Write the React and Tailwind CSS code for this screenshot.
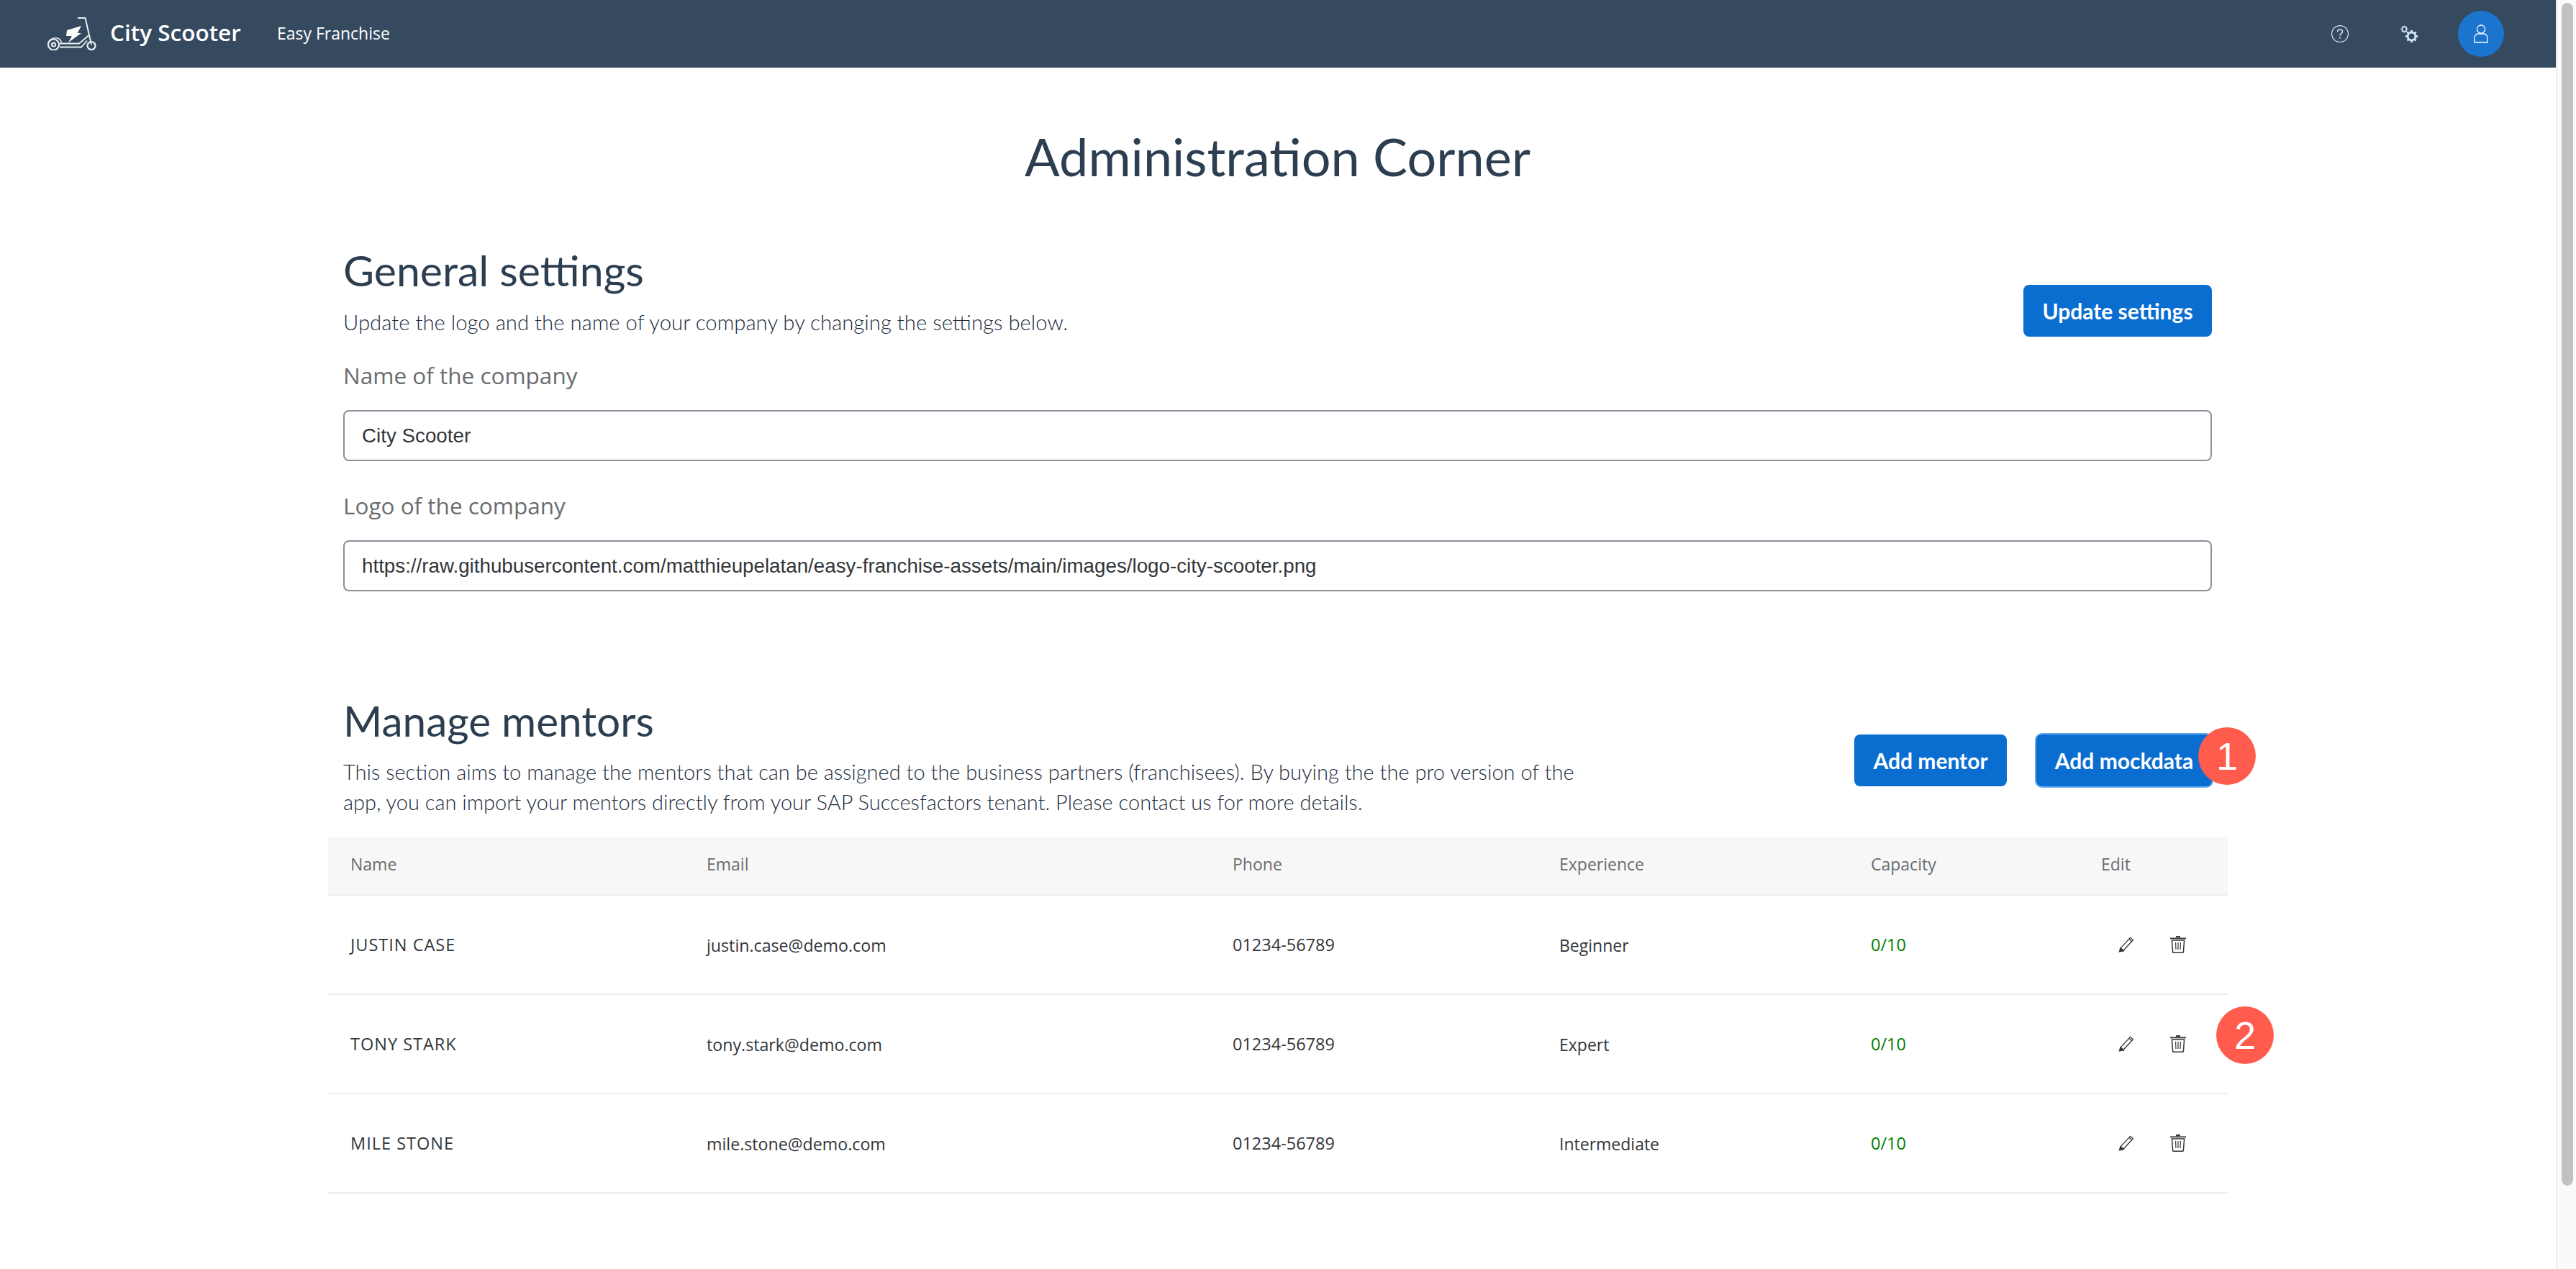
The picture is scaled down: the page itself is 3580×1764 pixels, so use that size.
import React from "react";

const mentors = [
  { name: "JUSTIN CASE", email: "justin.case@demo.com", experience: "Beginner" },
  { name: "TONY STARK", email: "tony.stark@demo.com", experience: "Expert" },
  { name: "MILE STONE", email: "mile.stone@demo.com", experience: "Intermediate" },
];

const gridCols = "grid grid-cols-[495px_731px_454px_433px_320px_1fr]";

const ScooterLogo = () => (
  <svg viewBox="0 0 68 46" className="h-[46px] w-[68px] shrink-0" fill="none" stroke="#e8edf2" strokeWidth="2">
    <path d="M42 1h10.5l8.5 37" />
    <path d="M17 36.5h27l13-11M17 41.5h30l8-9" strokeWidth="1.8" />
    <circle cx="61" cy="39.5" r="5.5" strokeWidth="2.2" />
    <circle cx="8.5" cy="38" r="7.5" strokeWidth="2.2" />
    <circle cx="8.5" cy="38" r="2.6" strokeWidth="2" />
    <path d="M0.5 37c1-6 7-9 13-8 3 .5 5 3 6 6" strokeWidth="1.6" />
    <path d="M27 18l20-6-5.5 10H47L29 35l5-9h-8z" fill="#ffffff" stroke="none" />
  </svg>
);

const HelpIcon = () => (
  <svg viewBox="0 0 24 24" className="h-6 w-6" fill="none" stroke="#d1e8ff" strokeWidth="1.2">
    <circle cx="12" cy="12" r="11.4" />
    <path d="M8.6 9.2c0-2 1.5-3.3 3.4-3.3s3.4 1.2 3.4 3c0 2.8-3.4 2.6-3.4 5.6" strokeWidth="1.5" />
    <circle cx="12" cy="17.6" r="1.1" fill="#d1e8ff" stroke="none" />
  </svg>
);

const GearsIcon = () => (
  <svg viewBox="0 0 24 24" className="h-6 w-6" fill="none" stroke="#d1e8ff">
    <circle cx="5.4" cy="5.6" r="3.1" strokeWidth="1.4" />
    <path d="M5.4 0.4v2M5.4 8.8v2M0.2 5.6h2M8.6 5.6h2M1.8 2l1.4 1.4M7.6 7.8L9 9.2M1.8 9.2l1.4-1.4M7.6 3.4L9 2" strokeWidth="1.5" />
    <circle cx="15.5" cy="15.5" r="5.4" strokeWidth="2.8" />
    <path d="M15.5 7v3M15.5 21v3M7 15.5h3M21 15.5h3M9.5 9.5l2 2M19.5 19.5l2 2M9.5 21.5l2-2M19.5 11.5l2-2" strokeWidth="3" />
  </svg>
);

const UserIcon = () => (
  <svg viewBox="0 0 20 26" className="h-[26px] w-5" fill="none" stroke="#ffffff" strokeWidth="1.3">
    <circle cx="10" cy="6.6" r="5.6" />
    <path d="M1 25v-6c0-3 2-6 5-6h8c3 0 5 3 5 6v6z" />
  </svg>
);

const PencilIcon = () => (
  <svg viewBox="0 0 22 22" className="h-[22px] w-[22px]" fill="none" stroke="#32363a" strokeWidth="1.3">
    <path d="M16.6 1.4l3.8 3.4L7 19.3l-3.8-3.4z" />
    <path d="M15 3.4l3.6 3.4" />
    <path d="M1.4 21l1.4-5 4.4 3.8z" fill="#32363a" />
  </svg>
);

const TrashIcon = () => (
  <svg viewBox="0 0 22 24" className="h-6 w-[22px]" fill="none" stroke="#32363a" strokeWidth="1.5">
    <path d="M0 3.4h22" strokeWidth="1.8" />
    <path d="M8 1.2h6" strokeWidth="2.2" />
    <path d="M2.4 6h17.2L18.4 22.2c-.1.8-.6 1.1-1.4 1.1H5c-.8 0-1.3-.3-1.4-1.1z" />
    <path d="M7.6 9l.4 10M11 9v10M14.4 9l-.4 10" strokeWidth="1.2" />
  </svg>
);

const Badge = ({ children, className }) => (
  <div className={`absolute flex h-20 w-20 items-center justify-center rounded-full bg-[#ff5c4d] font-['Liberation_Sans',sans-serif] text-[54px] font-normal leading-none text-white ${className}`}>
    {children}
  </div>
);

const PrimaryButton = ({ children, className = "" }) => (
  <button className={`relative h-[72px] rounded-lg bg-[#0a6ed1] text-[30px] font-bold text-white ${className}`}>
    {children}
  </button>
);

const TextField = ({ label, value, className = "" }) => (
  <div className={className}>
    <label className="block font-['Open_Sans',sans-serif] text-[31.5px] leading-10 text-[#6a6d70]">{label}</label>
    <div className="mt-[28px] flex h-[71px] items-center rounded-lg border-2 border-[#89919a] px-[24px] font-['Liberation_Sans',sans-serif] text-[27.75px] text-[#32363a]">
      {value}
    </div>
  </div>
);

export default function App() {
  return (
    <div className="flex h-[1764px] w-full overflow-hidden bg-white font-['Lato',sans-serif]">
      <div className="min-w-0 flex-1">
        {/* Shell bar */}
        <header className="flex h-[94px] items-center bg-[#354a5f] pl-[66px] pr-[72px] text-white">
          <ScooterLogo />
          <span className="ml-[19px] pb-1 font-['Open_Sans',sans-serif] text-[31.5px] font-semibold">City Scooter</span>
          <span className="ml-[50px] pb-0.5 font-['Open_Sans',sans-serif] text-[23px]">Easy Franchise</span>
          <div className="ml-auto flex items-center">
            <HelpIcon />
            <div className="ml-[72px]"><GearsIcon /></div>
            <div className="ml-[56px] flex h-16 w-16 items-center justify-center rounded-full bg-[#1b74ce]">
              <UserIcon />
            </div>
          </div>
        </header>

        <main className="pl-[477px] pr-[478px] pt-[75px] text-[#2c3e50]">
          <h1 className="text-center text-[72px] leading-[96px]">Administration Corner</h1>

          <section className="mt-[76px] flex items-start justify-between">
            <div>
              <h2 className="text-[59px] leading-[70px]">General settings</h2>
              <p className="mt-4 text-[29.3px] font-light leading-[42px] text-[#1d2d3e]">
                Update the logo and the name of your company by changing the settings below.
              </p>
            </div>
            <PrimaryButton className="mt-[55px] w-[262px]">Update settings</PrimaryButton>
          </section>

          <TextField className="mt-[33px]" label="Name of the company" value="City Scooter" />
          <TextField
            className="mt-[42px]"
            label="Logo of the company"
            value="https://raw.githubusercontent.com/matthieupelatan/easy-franchise-assets/main/images/logo-city-scooter.png"
          />

          <section className="mt-[144px] flex items-start justify-between">
            <div className="w-[1730px]">
              <h2 className="text-[58.5px] leading-[70px]">Manage mentors</h2>
              <p className="mt-4 text-[29px] font-light leading-[42px] text-[#1d2d3e]">
                This section aims to manage the mentors that can be assigned to the business partners (franchisees). By buying the the pro version of the app, you can import your mentors directly from your SAP Succesfactors tenant. Please contact us for more details.
              </p>
            </div>
            <div className="mt-[55px] flex gap-[41px]">
              <PrimaryButton className="w-[212px]">Add mentor</PrimaryButton>
              <PrimaryButton className="w-[244px] ring-2 ring-[#64a9f0]">
                Add mockdata
                <Badge className="left-[225px] top-[-10px]">1</Badge>
              </PrimaryButton>
            </div>
          </section>

          {/* Mentors table */}
          <div className="ml-[-21px] mt-[27px] w-[2640px] font-['Open_Sans',sans-serif]">
            <div className={`${gridCols} h-[82px] border-b-2 border-[#eeeeee] bg-[#f7f7f7] pt-[24px] text-[23px] leading-7 text-[#6a6d70]`}>
              {["Name", "Email", "Phone", "Experience", "Capacity", "Edit"].map((title) => (
                <div key={title} className="pl-[31px]">{title}</div>
              ))}
            </div>
            {mentors.map((mentor, i) => (
              <div key={mentor.name} className={`${gridCols} relative h-[138px] items-center border-b-2 border-[#eeeeee] text-[23.5px] text-[#32363a]`}>
                <div className="pl-[31px] pt-0.5 tracking-[1px]">{mentor.name}</div>
                <div className="pl-[31px] pt-0.5 text-[23.2px]">{mentor.email}</div>
                <div className="pl-[31px] pt-0.5">01234-56789</div>
                <div className="pl-[31px] pt-0.5 text-[23px]">{mentor.experience}</div>
                <div className="pl-[31px] pt-0.5 text-[#008000]">0/10</div>
                <div className="flex items-center gap-[50px] pl-[55px]">
                  <PencilIcon />
                  <TrashIcon />
                </div>
                {i === 1 && <Badge className="left-[2624px] top-[16px]">2</Badge>}
              </div>
            ))}
          </div>
        </main>
      </div>

      {/* Scrollbar */}
      <div className="w-[28px] shrink-0 border-l-2 border-[#ececec] bg-[#fafafa] pl-[6px] pt-1">
        <div className="h-[1644px] w-4 rounded-full bg-[#c1c1c1]" />
      </div>
    </div>
  );
}
